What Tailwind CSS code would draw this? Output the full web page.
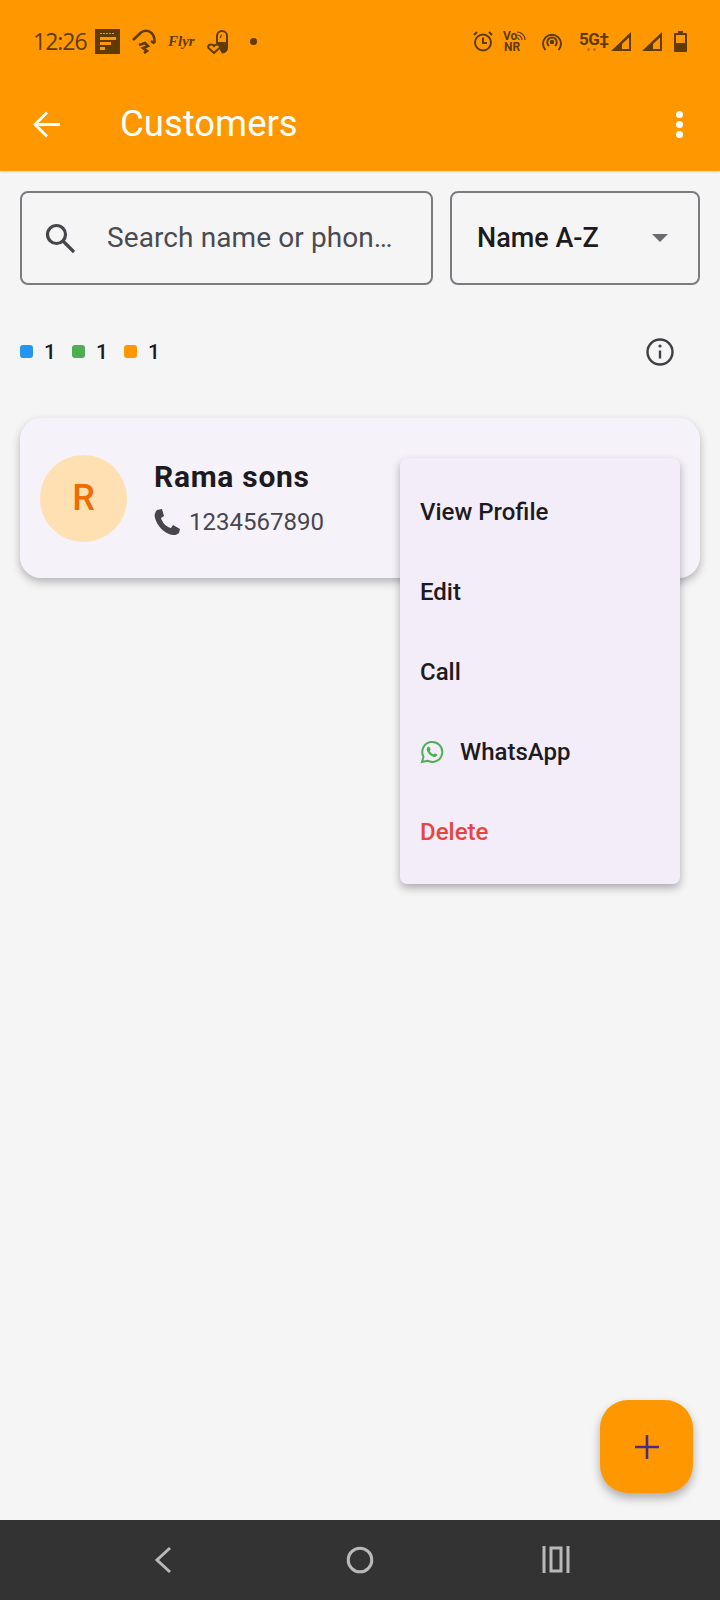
<!DOCTYPE html>
<html lang="en">
<head>
<meta charset="UTF-8">
<meta name="viewport" content="width=device-width, initial-scale=1.0">
<title>Customers</title>
<script src="https://cdn.jsdelivr.net/npm/@tailwindcss/browser@4"></script>
</head>
<body class="bg-[#f5f5f6] font-['Roboto',sans-serif]">
<div class="relative w-[720px] h-[1600px] overflow-hidden flex flex-col">

  <!-- App bar with status bar -->
  <header class="bg-[#ff9800] h-[171px] shrink-0 shadow-[0_1px_2px_rgba(0,0,0,0.12)] z-10">
    <div class="h-[83px] flex items-center pl-[33px] pr-[33px] text-[#5f3b00]">
      <span class="font-['Open_Sans',sans-serif] text-[23px] tracking-[-1px] w-[62px]">12:26</span>
      <svg class="w-[25px] h-[25px]" viewBox="0 0 25 25"><rect width="25" height="25" fill="#5f3b00"/><path d="M5 4.500h15" stroke="#ff9800" stroke-width="1" stroke-dasharray="2 1" fill="none"/><path d="M5 9.500h16M5 14.500h11M5 19.500h5" stroke="#ff9800" stroke-width="3" fill="none"/></svg>
      <svg class="ml-[12px] w-[25px] h-[25px]" viewBox="0 0 25 25" fill="none" stroke="#5f3b00" stroke-width="2.600"><path d="M1 11 9 3.500Q14 0 19 3.500 23 7 22.500 14"/><path d="M19 12l3.500 2.500"/><path d="M7 16l6-2 3 3-5 2 4 3-3 2"/></svg>
      <span class="ml-[11px] font-['Liberation_Serif',serif] italic font-bold text-[15px] w-[26px]">Flyr</span>
      <svg class="ml-[13px] w-[23px] h-[25px]" viewBox="0 0 23 25"><path d="M9 14V7a6 6 0 0 1 12 0v12a5.500 5.500 0 0 1-6 5.500z" fill="#5f3b00"/><path d="M11 13V7a4 4 0 0 1 8 0v6z" fill="#ff9800"/><path d="M15 6c-1 0-1.500 1-1.500 3" stroke="#5f3b00" stroke-width="1.200" fill="none"/><path d="M7 24 1.500 19c-1.500-3 3-5 5.500-2 2.500-3 7-1 5.500 2z" fill="#ff9800" stroke="#5f3b00" stroke-width="2"/></svg>
      <span class="ml-[20px] w-[7px] h-[7px] rounded-full bg-[#5f3b00]"></span>
      <div class="ml-auto flex items-center">
        <svg class="w-[20px] h-[21px]" viewBox="0 0 20 21" fill="none" stroke="#5f3b00" stroke-width="2"><circle cx="10" cy="11.500" r="8"/><path d="M10 6.500v5.500h4M1 4l3-3M19 4l-3-3"/></svg>
        <div class="relative ml-[10px] w-[23px] text-[12px] font-bold leading-[11px]">
          <div>Vo</div>
          <div class="ml-[1px]">NR</div>
          <svg class="absolute left-[13px] top-0 w-[10px] h-[10px]" viewBox="0 0 10 10" fill="none" stroke="#5f3b00" stroke-width="1.200"><path d="M1 1c4 0 8 3 8 8M1 4c2.500 0 5 2 5 5M1 7c1 0 2 1 2 2"/></svg>
        </div>
        <svg class="ml-[16px] w-[20px] h-[20px]" viewBox="0 0 20 20" fill="none" stroke="#5f3b00" stroke-width="2"><path d="M3.500 18a9 9 0 1 1 13 0"/><path d="M7 14a4.800 4.800 0 1 1 6 0"/><circle cx="10" cy="10" r="1.300" fill="#5f3b00"/></svg>
        <div class="ml-[17px] w-[28px] flex flex-col items-start">
          <span class="text-[17px] font-bold leading-[15px] tracking-[-0.5px]">5G‡</span>
          <div class="ml-[8px] mt-[1px] flex gap-[3px]"><span class="w-[3px] h-[3px] rounded-full bg-[#5f3b00]/40"></span><span class="w-[3px] h-[3px] rounded-full bg-[#5f3b00]/40"></span></div>
        </div>
        <svg class="ml-[3px] w-[22px] h-[21px]" viewBox="0 0 22 21"><path d="M21 1v19H1z" fill="#5f3b00"/><path d="M19 6.500V18h-7v-5z" fill="#ff9800"/></svg>
        <svg class="ml-[9px] w-[22px] h-[21px]" viewBox="0 0 22 21"><path d="M21 1v19H1z" fill="#5f3b00"/><path d="M19 6.500V18h-7v-5z" fill="#ff9800"/></svg>
        <svg class="ml-[11px] w-[13px] h-[21px]" viewBox="0 0 13 21"><path d="M4 0h5v2h3a1 1 0 0 1 1 1v17a1 1 0 0 1-1 1H1a1 1 0 0 1-1-1V3a1 1 0 0 1 1-1h3z" fill="#5f3b00"/><rect x="2" y="4" width="9" height="8" fill="#ff9800"/></svg>
      </div>
    </div>
    <div class="h-[88px] flex items-center pb-[5px] pl-[33px] pr-[37px] text-white">
      <svg class="w-[27px] h-[27px]" viewBox="0 0 27 27" fill="none" stroke="white" stroke-width="2.800"><path d="M27 13.500H2M14 1.500 2 13.500l12 12"/></svg>
      <h1 class="ml-[60px] text-[36.500px] leading-none">Customers</h1>
      <div class="ml-auto flex flex-col gap-[3px]">
        <span class="w-[7px] h-[7px] rounded-full bg-white"></span>
        <span class="w-[7px] h-[7px] rounded-full bg-white"></span>
        <span class="w-[7px] h-[7px] rounded-full bg-white"></span>
      </div>
    </div>
  </header>

  <main class="flex-1 bg-[#f5f5f6] px-[20px]">
    <!-- Search and sort -->
    <div class="mt-[20px] flex gap-[17px] h-[94px]">
      <div class="w-[413px] border-2 border-[#7c7c80] rounded-[8px] flex items-center pl-[22px] pr-[12px]">
        <svg class="w-[32px] h-[32px] shrink-0" viewBox="0 0 32 32" fill="none" stroke="#45454b" stroke-width="3.200"><circle cx="12.500" cy="12.500" r="9"/><path d="m19 19 11 11"/></svg>
        <span class="ml-[31px] text-[28px] tracking-[0.1px] text-[#4a4a50] whitespace-nowrap">Search name or phon…</span>
      </div>
      <div class="w-[250px] border-2 border-[#7c7c80] rounded-[8px] flex items-center pl-[25px] pr-[30px]">
        <span class="text-[27px] font-medium text-[#1d1b20]">Name A-Z</span>
        <span class="ml-auto w-0 h-0 border-x-[8px] border-x-transparent border-t-[8px] border-t-[#6b6b6f]"></span>
      </div>
    </div>

    <!-- Legend -->
    <div class="mt-[52px] flex items-center h-[32px] pr-[10px]">
      <span class="w-[13px] h-[13px] rounded-[3px] bg-[#2196f3] mb-[3px]"></span>
      <span class="ml-[11px] text-[21px] font-medium text-[#1d1b20] w-[17px]">1</span>
      <span class="ml-[11px] w-[13px] h-[13px] rounded-[3px] bg-[#4caf50] mb-[3px]"></span>
      <span class="ml-[11px] text-[21px] font-medium text-[#1d1b20] w-[17px]">1</span>
      <span class="ml-[11px] w-[13px] h-[13px] rounded-[3px] bg-[#ff9800] mb-[3px]"></span>
      <span class="ml-[11px] text-[21px] font-medium text-[#1d1b20]">1</span>
      <svg class="ml-auto mr-[16px] mb-[2px] w-[28px] h-[28px]" viewBox="0 0 28 28" fill="none" stroke="#3f3f44" stroke-width="2.400"><circle cx="14" cy="14" r="12.500"/><path d="M14 12.500v8"/><circle cx="14" cy="8" r="1" fill="#3f3f44" stroke-width="1.200"/></svg>
    </div>

    <!-- Customer card -->
    <div class="mt-[49px] h-[160px] bg-[#f6f2fa] rounded-[21px] shadow-[0_4px_8px_rgba(0,0,0,0.27)] flex items-center pl-[20px]">
      <div class="w-[87px] h-[87px] rounded-full bg-[#ffe0b2] flex items-center justify-center text-[36px] font-medium text-[#ef6c00]">R</div>
      <div class="ml-[27px]">
        <div class="text-[30px] font-bold leading-[34px] tracking-[0.7px] text-[#1d1b20]">Rama sons</div>
        <div class="mt-[14px] flex items-center text-[24px] leading-[28px] text-[#49454f]">
          <svg class="w-[27px] h-[27px]" viewBox="0 0 27 27" fill="#49454f"><path d="M3 1 8 0l2 7-3 2c1 4 5 9 10 10l2-3 7 4-1 4c-2 2-6 3-10 1C8 22 3 16 1 9 0 6 1 3 3 1z"/></svg>
          <span class="ml-[8px]">1234567890</span>
        </div>
      </div>
    </div>
  </main>

  <!-- Popup menu -->
  <div class="absolute left-[400px] top-[458px] w-[280px] h-[426px] bg-[#f2edf8] rounded-[7px] shadow-[0_4px_8px_rgba(0,0,0,0.3)] z-20 flex flex-col pt-[14px] pl-[20px] text-[24px] font-medium text-[#1d1b20]">
    <div class="h-[80px] flex items-center shrink-0">View Profile</div>
    <div class="h-[80px] flex items-center shrink-0">Edit</div>
    <div class="h-[80px] flex items-center shrink-0">Call</div>
    <div class="h-[80px] flex items-center shrink-0">
      <svg class="w-[24px] h-[24px]" viewBox="0 0 24 24" fill="none"><path d="M2 22l1.500-5.300A10 10 0 1 1 7.500 20.700z" stroke="#4caf50" stroke-width="2"/><path d="M8.500 6.800c-.3 0-.7.1-1 .5-.8 1-1 2.300-.4 3.600 1.200 2.600 3.300 4.700 6 5.800 1.300.5 2.700.3 3.600-.6.500-.5.600-1.100.6-1.600l-2.500-1.300-1.200 1.300c-1.700-.7-3-2-3.800-3.700l.9-1.100-1.100-2.800z" fill="#4caf50"/></svg>
      <span class="ml-[16px]">WhatsApp</span>
    </div>
    <div class="h-[80px] flex items-center shrink-0 text-[#e84442]">Delete</div>
  </div>

  <!-- FAB -->
  <button class="absolute left-[600px] top-[1400px] w-[93px] h-[93px] bg-[#ff9800] rounded-[28px] shadow-[0_5px_10px_rgba(0,0,0,0.3)] flex items-center justify-center z-20">
    <svg class="w-[24px] h-[24px]" viewBox="0 0 24 24" stroke="#4a2c82" stroke-width="2.600"><path d="M12 0v24M0 12h24"/></svg>
  </button>

  <!-- System navigation -->
  <nav class="h-[80px] shrink-0 bg-[#333333] relative flex items-center">
    <svg class="absolute left-[154px] top-[26px] w-[20px] h-[28px]" viewBox="0 0 20 28" fill="none" stroke="#b9b9b9" stroke-width="3"><path d="M16 2 3 14l13 12"/></svg>
    <svg class="absolute left-[346px] top-[26px] w-[28px] h-[28px]" viewBox="0 0 28 28" fill="none" stroke="#b9b9b9" stroke-width="3"><circle cx="14" cy="14" r="11.800"/></svg>
    <svg class="absolute left-[542px] top-[26px] w-[28px] h-[27px]" viewBox="0 0 28 27" fill="none" stroke="#b9b9b9" stroke-width="3"><path d="M2 0v27M26 0v27"/><rect x="9" y="2" width="10" height="23"/></svg>
  </nav>
</div>
</body>
</html>
